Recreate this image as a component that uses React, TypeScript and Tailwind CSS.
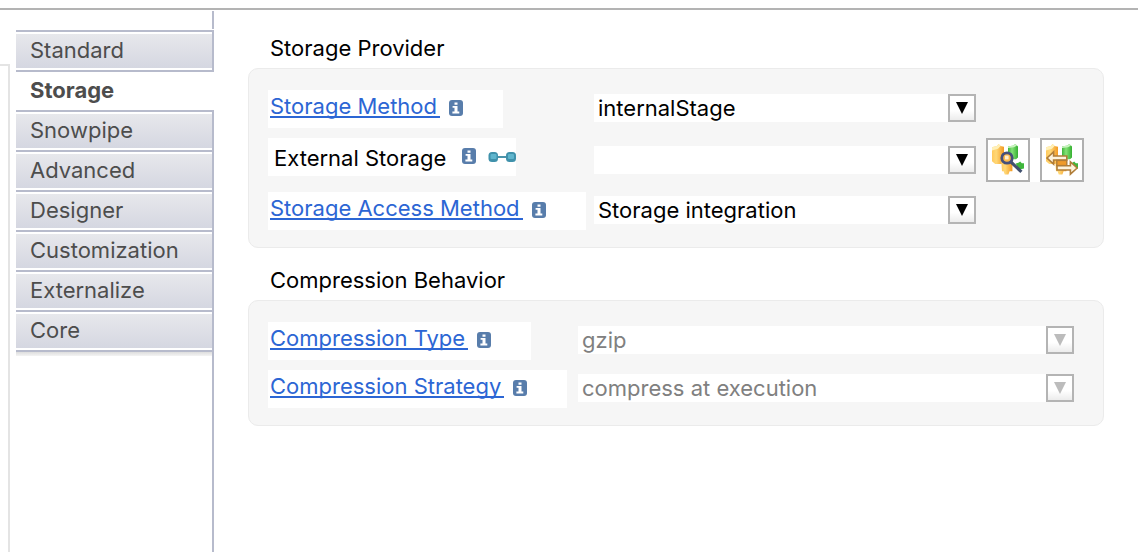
import { useState, type ReactNode } from "react";

const tabs = [
  "Standard",
  "Storage",
  "Snowpipe",
  "Advanced",
  "Designer",
  "Customization",
  "Externalize",
  "Core",
];

function InfoIcon() {
  return (
    <svg viewBox="0 0 14 16" className="mt-[10px] h-4 w-[14px] shrink-0" aria-hidden="true">
      <rect width="14" height="16" rx="3" fill="#587dab" />
      <path d="M5.5 2.6h3v2.2h-3zM3.6 6h4.9v5.6h1.8v1.8H3.4v-1.8h2.1V7.8H3.6z" fill="#fff" />
    </svg>
  );
}

function LinkedIcon() {
  return (
    <svg viewBox="0 0 28 12" className="mt-[13px] h-3 w-7 shrink-0" aria-hidden="true">
      <rect x="8" y="5" width="12" height="2" fill="#4b93aa" />
      <rect x="0.5" y="1" width="9.5" height="10" rx="3.5" fill="#3f91ab" />
      <rect x="2.5" y="3" width="6" height="5" rx="1" fill="#5fb5cd" />
      <rect x="18" y="1" width="10" height="10" rx="3.5" fill="#3f91ab" />
      <rect x="20" y="3" width="6" height="5" rx="1" fill="#5fb5cd" />
    </svg>
  );
}

function PuzzlePieces() {
  return (
    <>
      <defs>
        <linearGradient id="amber" x1="0" y1="0" x2="1" y2="0">
          <stop offset="0" stopColor="#ffc95c" />
          <stop offset="0.35" stopColor="#ffd877" />
          <stop offset="1" stopColor="#f39a22" />
        </linearGradient>
        <linearGradient id="leaf" x1="0" y1="0" x2="1" y2="0">
          <stop offset="0" stopColor="#3db33a" />
          <stop offset="0.4" stopColor="#84e277" />
          <stop offset="1" stopColor="#35b031" />
        </linearGradient>
      </defs>
      <path d="M0 1.6l2.4-.6.9-1 1 1 1.7.4V9L4.6 10H1.6L0 8.6z" fill="url(#amber)" />
      <path d="M4.6 8h5.6v5.6H8.8l-.6 1.6H6.4l-.6-1.6H5z" fill="url(#amber)" />
      <path d="M0 1.6l2.4-.6.9-1 1 1L3 2.4l-3 .8z" fill="#fff0b8" />
      <path d="M8 1.2L10.6.8l1-.8.9.8.5.4v5.6l-1 .8H8z" fill="url(#leaf)" />
      <path d="M8 1.2L10.6.8l1-.8.9.8-1.5.8-3 .4z" fill="#c9f3bf" />
      <path d="M11.8 9.8l1.4-.4.9-.6.8.8H16v2.6l-2.4.6z" fill="#3fb63c" />
    </>
  );
}

function BrowseIcon() {
  return (
    <svg viewBox="0 0 16 16" className="size-8" aria-hidden="true">
      <PuzzlePieces />
      <path d="M9.4 8.9l5.3 5" stroke="#41506f" strokeWidth="1.6" fill="none" />
      <circle cx="7.5" cy="7" r="2.6" fill="#fbb84c" stroke="#46507a" strokeWidth="1.4" />
      <rect x="6.5" y="5.8" width="1.8" height="1.9" fill="#fff0cf" />
    </svg>
  );
}

function SwapIcon() {
  return (
    <svg viewBox="0 0 16 16" className="size-8" aria-hidden="true">
      <PuzzlePieces />
      <path
        d="M.5 7L3.8 3.9V6h6.6v2H3.8v2.1z"
        fill="#fdf3dc"
        stroke="#b07d38"
        strokeWidth="0.8"
      />
      <rect x="5.4" y="8.2" width="5" height="2.6" fill="#ef9a2a" stroke="#b07d38" strokeWidth="0.7" />
      <path
        d="M15.6 12L12.2 15.1V13H5.5v-2.1h6.7V8.9z"
        fill="#fdf3dc"
        stroke="#b07d38"
        strokeWidth="0.8"
      />
    </svg>
  );
}

function LinkLabel({ id, text }: { id: string; text: string }) {
  return (
    <div className="flex h-[38px] w-fit items-start bg-white pr-10 pl-[2px]">
      <label htmlFor={id} className="mt-[6px] mr-[9px] flex whitespace-nowrap">
        <a href="#help" className="border-b-2 border-[#2c66d4] pr-[3px] leading-5 text-[#2c66d4]">
          {text}
        </a>
      </label>
      <InfoIcon />
    </div>
  );
}

function Dropdown({
  id,
  options,
  disabled,
}: {
  id: string;
  options: string[];
  disabled?: boolean;
}) {
  return (
    <div className="relative flex h-7 min-w-0 bg-white">
      <select
        id={id}
        disabled={disabled}
        className="h-7 w-full appearance-none bg-white pr-8 pl-1 text-black outline-none disabled:text-[#808080] disabled:opacity-100"
      >
        {options.map((o) => (
          <option key={o}>{o}</option>
        ))}
      </select>
      <span className="pointer-events-none absolute top-0 right-0 flex size-7 items-center justify-center border-2 border-[#b4b4b4] bg-linear-to-b from-white from-60% to-[#ececec]">
        <svg
          viewBox="0 0 12 12"
          className={disabled ? "size-3 text-[#bcbcbc]" : "size-3 text-black"}
          aria-hidden="true"
        >
          <path d="M0 0h12L6 12z" fill="currentColor" />
        </svg>
      </span>
    </div>
  );
}

function Section({ title, children }: { title: string; children: ReactNode }) {
  return (
    <section>
      <h2 className="pl-[22px] leading-8">{title}</h2>
      <div className="mt-1 flex flex-col gap-[10px] rounded-[10px] border border-[#ebebeb] bg-[#f6f6f6] pt-[21px] pb-[17px] pl-[19px]">
        {children}
      </div>
    </section>
  );
}

const providerRow = "mr-[19px] grid grid-cols-[316px_minmax(0,1fr)_98px] gap-[10px]";
const compressionRow = "mr-[29px] grid grid-cols-[300px_minmax(0,1fr)] gap-[10px]";

export default function App() {
  const [active, setActive] = useState("Storage");

  return (
    <div className="flex min-h-screen flex-col bg-white pt-2 font-['Inter','Liberation_Sans',sans-serif] text-[22px] leading-7 text-black">
      <div className="flex grow border-t-2 border-[#b3b3b3]">
        <div className="mt-[54px] w-[10px] shrink-0 border-t-2 border-r-2 border-[#e4e4e4]" />
        <nav className="ml-[6px] flex w-[198px] shrink-0 flex-col">
          <div className="my-px h-[18px] border-r-2 border-[#b7bbcc]" />
          <ul>
            {tabs.map((tab) => (
              <li
                key={tab}
                className={
                  tab === active
                    ? "h-10 border-t-2 border-[#b7bbcc]"
                    : "h-10 border-t-2 border-r-2 border-[#b7bbcc] py-[2px]"
                }
              >
                <button
                  type="button"
                  onClick={() => setActive(tab)}
                  className={
                    tab === active
                      ? "flex h-[38px] w-full items-center pb-[2px] pl-[14px] text-left font-bold text-[#4d4d4d]"
                      : "flex h-[34px] w-full items-center bg-linear-to-b from-[#e7e8ec] to-[#d5d7e1] pb-[2px] pl-[14px] text-left text-[#4d4d4d]"
                  }
                >
                  {tab}
                </button>
              </li>
            ))}
          </ul>
          <div className="grow border-t-2 border-r-2 border-[#b7bbcc]">
            <div className="h-1 bg-linear-to-b from-[#dedede] to-[#f4f4f4]" />
          </div>
        </nav>

        <main className="mt-[22px] mr-[34px] ml-[34px] flex min-w-0 grow flex-col gap-4">
          <Section title="Storage Provider">
            <div className={providerRow}>
              <LinkLabel id="method" text="Storage Method" />
              <div className="mt-1">
                <Dropdown id="method" options={["internalStage", "externalStage"]} />
              </div>
            </div>
            <div className={providerRow}>
              <div className="flex h-[38px] w-fit bg-white pl-[6px]">
                <label htmlFor="external" className="mr-4 pt-[6px] whitespace-nowrap">
                  External Storage
                </label>
                <InfoIcon />
                <span className="ml-3 flex">
                  <LinkedIcon />
                </span>
              </div>
              <div className="mt-2">
                <Dropdown id="external" options={[""]} />
              </div>
              <div className="flex h-11 justify-between bg-white">
                <button
                  type="button"
                  aria-label="Browse"
                  className="flex size-11 items-center justify-center border-2 border-[#b0b0b0] bg-white"
                >
                  <BrowseIcon />
                </button>
                <button
                  type="button"
                  aria-label="Swap"
                  className="flex size-11 items-center justify-center border-2 border-[#b0b0b0] bg-white"
                >
                  <SwapIcon />
                </button>
              </div>
            </div>
            <div className={providerRow}>
              <LinkLabel id="access" text="Storage Access Method" />
              <div className="mt-1">
                <Dropdown id="access" options={["Storage integration"]} />
              </div>
            </div>
          </Section>

          <Section title="Compression Behavior">
            <div className={compressionRow}>
              <LinkLabel id="ctype" text="Compression Type" />
              <div className="mt-1">
                <Dropdown id="ctype" options={["gzip"]} disabled />
              </div>
            </div>
            <div className={compressionRow}>
              <LinkLabel id="cstrategy" text="Compression Strategy" />
              <div className="mt-1">
                <Dropdown id="cstrategy" options={["compress at execution"]} disabled />
              </div>
            </div>
          </Section>
        </main>
      </div>
    </div>
  );
}
